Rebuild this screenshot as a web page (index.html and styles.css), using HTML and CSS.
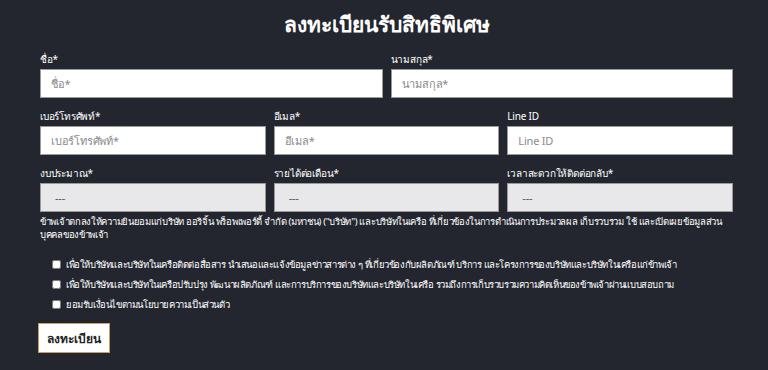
FILE: index.html
```html
<!DOCTYPE html>
<html lang="th">
<head>
    <meta charset="UTF-8">
    <meta name="viewport" content="width=device-width, initial-scale=1.0">
    <title>ลงทะเบียนรับสิทธิพิเศษ</title>
    <link rel="stylesheet" href="styles.css">
</head>
<body>
    <div class="container">
        <h2>ลงทะเบียนรับสิทธิพิเศษ</h2>
        <form id="register-form">
            <div class="row cols-2">
                <div class="field">
                    <label for="firstname">ชื่อ*</label>
                    <input type="text" id="firstname" placeholder="ชื่อ*">
                </div>
                <div class="field">
                    <label for="lastname">นามสกุล*</label>
                    <input type="text" id="lastname" placeholder="นามสกุล*">
                </div>
            </div>
            <div class="row cols-3">
                <div class="field">
                    <label for="phone">เบอร์โทรศัพท์*</label>
                    <input type="text" id="phone" placeholder="เบอร์โทรศัพท์*">
                </div>
                <div class="field">
                    <label for="email">อีเมล*</label>
                    <input type="text" id="email" placeholder="อีเมล*">
                </div>
                <div class="field">
                    <label for="line">Line ID</label>
                    <input type="text" id="line" placeholder="Line ID">
                </div>
            </div>
            <div class="row cols-3">
                <div class="field">
                    <label for="budget">งบประมาณ*</label>
                    <div class="select" id="budget">---</div>
                </div>
                <div class="field">
                    <label for="income">รายได้ต่อเดือน*</label>
                    <div class="select" id="income">---</div>
                </div>
                <div class="field">
                    <label for="time">เวลาสะดวกให้ติดต่อกลับ*</label>
                    <div class="select" id="time">---</div>
                </div>
            </div>
            <p class="consent">ข้าพเจ้าตกลงให้ความยินยอมแก่บริษัท ออริจิ้น พร็อพเพอร์ตี้ จำกัด (มหาชน) ("บริษัท") และบริษัทในเครือ ที่เกี่ยวข้องในการดำเนินการประมวลผล เก็บรวบรวม ใช้ และเปิดเผยข้อมูลส่วนบุคคลของข้าพเจ้า</p>
            <div class="checks">
                <label class="check"><input type="checkbox"> เพื่อให้บริษัทและบริษัทในเครือติดต่อสื่อสาร นำเสนอและแจ้งข้อมูลข่าวสารต่าง ๆ ที่เกี่ยวข้องกับผลิตภัณฑ์ บริการ และโครงการของบริษัทและบริษัทในเครือแก่ข้าพเจ้า</label>
                <label class="check"><input type="checkbox"> เพื่อให้บริษัทและบริษัทในเครือปรับปรุง พัฒนาผลิตภัณฑ์ และการบริการของบริษัทและบริษัทในเครือ รวมถึงการเก็บรวบรวมความคิดเห็นของข้าพเจ้าผ่านแบบสอบถาม</label>
                <label class="check"><input type="checkbox"> ยอมรับเงื่อนไขตามนโยบายความเป็นส่วนตัว</label>
            </div>
            <button type="submit" class="submit">ลงทะเบียน</button>
        </form>
    </div>
</body>
</html>
```

FILE: styles.css
```css
body {
    font-family: 'Noto Sans', 'Liberation Sans', sans-serif;
    background-color: #23262e;
    color: #fff;
    margin: 0;
    padding: 0;
}

.container {
    padding: 0 35px 0 40px;
}

h2 {
    text-align: center;
    font-size: 21px;
    font-weight: bold;
    margin: 0;
    padding-top: 10px;
    height: 42px;
    line-height: 28px;
}

.row {
    display: grid;
    gap: 8px;
    margin-bottom: 11px;
}

.cols-2 {
    grid-template-columns: 1fr 1fr;
}

.cols-3 {
    grid-template-columns: 1fr 1fr 1fr;
}

.field label {
    display: block;
    font-size: 10px;
    letter-spacing: -0.2px;
    line-height: 14px;
    margin-bottom: 3px;
}

.field input[type="text"], .select {
    box-sizing: border-box;
    width: 100%;
    height: 29px;
    padding: 0 10px;
    border: 1px solid #9a9a9a;
    border-radius: 0;
    background-color: #fff;
    font-family: inherit;
    font-size: 11px;
    letter-spacing: -0.2px;
    color: #333;
    outline: none;
}

.field input::placeholder {
    color: #8a8a8a;
}

.select {
    background-color: #e8e8eb;
    line-height: 27px;
    padding: 0 14px;
    color: #555;
}

.consent {
    font-size: 9.5px;
    letter-spacing: -0.3px;
    line-height: 13px;
    margin: -8px 0 0;
    padding-right: 8px;
}

.checks {
    margin-top: 13px;
    padding-left: 12px;
}

.check {
    display: flex;
    align-items: center;
    font-size: 9.5px;
    letter-spacing: -0.4px;
    white-space: nowrap;
    height: 20px;
}

.check input {
    width: 9px;
    height: 9px;
    margin: 0 5px 0 0;
}

.submit {
    margin: 9px 0 0 -2px;
    width: 72px;
    height: 30px;
    background-color: #fff;
    border: 1px solid #c9a063;
    font-family: inherit;
    font-size: 12px;
    font-weight: bold;
    color: #222;
    cursor: pointer;
}
```
